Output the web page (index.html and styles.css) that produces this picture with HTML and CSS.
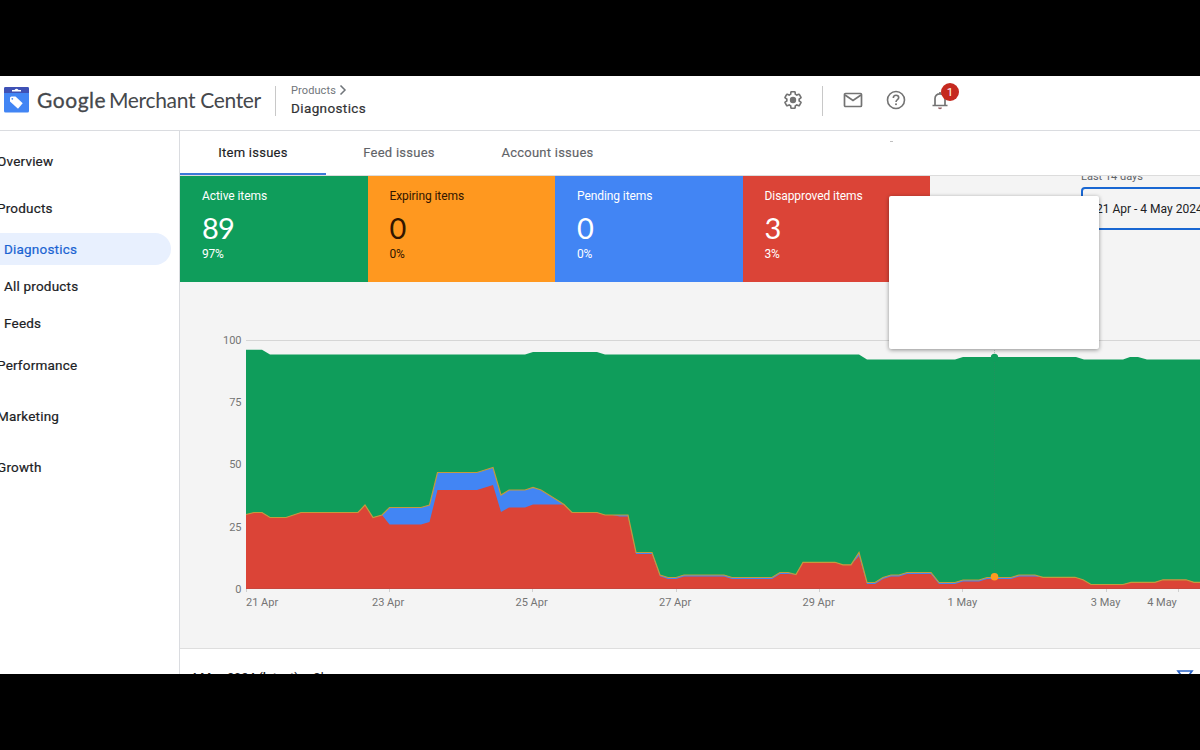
FILE: index.html
```html
<!DOCTYPE html>
<html lang="en">
<head>
<meta charset="utf-8">
<title>Google Merchant Center</title>
<link rel="stylesheet" href="styles.css">
</head>
<body>
<div class="app">
  <header class="topbar">
    <svg class="logo" width="25" height="26" viewBox="0 0 25 26"><rect width="25" height="25.500" rx="1.500" fill="#4285f4"/><path d="M0 6V1.500Q0 0 1.500 0H23.500Q25 0 25 1.500V6Z" fill="#3f51b5"/><path d="M8 4.500V3H10.500Q12.500 .5 14.500 3H17V4.500Z" fill="#fff"/><path d="M6 11Q6 9.500 7.500 9.500H11.500L18.700 16.200L14 21.700L6 14.500Z" fill="#fff"/><circle cx="8.300" cy="11.800" r=".9" fill="#4285f4"/></svg>
    <div class="brand"><b>Google</b><span>Merchant Center</span></div>
    <div class="crumbs">
      <div class="crumb-parent">Products<svg width="8" height="10" viewBox="0 0 8 10"><path d="M1.500 .5L6 5L1.500 9.500" fill="none" stroke="#70757a" stroke-width="1.500"/></svg></div>
      <div class="crumb-current">Diagnostics</div>
    </div>
    <div class="actions">
      <svg width="22" height="22" viewBox="0 0 24 24"><path d="M19.430 12.980c.04-.32.07-.64.07-.98s-.03-.66-.07-.98l2.110-1.650c.19-.15.240-.42.120-.64l-2-3.460c-.12-.22-.39-.3-.61-.22l-2.490 1c-.52-.4-1.080-.73-1.690-.98l-.38-2.650A.488.488 0 0 0 14 2h-4c-.25 0-.46.180-.49.420l-.38 2.650c-.61.250-1.170.590-1.690.980l-2.490-1c-.23-.09-.49 0-.61.220l-2 3.460c-.13.220-.07.490.120.640l2.110 1.650c-.04.320-.07.650-.07.980s.03.660.07.980l-2.110 1.650c-.19.150-.24.420-.12.640l2 3.460c.12.220.390.300.610.220l2.490-1c.52.400 1.080.730 1.690.980l.38 2.650c.03.240.240.420.490.420h4c.25 0 .46-.18.490-.42l.38-2.650c.61-.25 1.170-.59 1.690-.98l2.490 1c.23.090.49 0 .61-.22l2-3.460c.12-.22.070-.49-.12-.64z" transform="translate(1.200 1.200) scale(.9)" fill="none" stroke="#737373" stroke-width="2"/><circle cx="12" cy="12" r="3.500" fill="#737373"/></svg>
      <i class="rule"></i>
      <svg width="20" height="16" viewBox="0 0 20 16"><rect x="1.500" y="1.500" width="17" height="13" rx="1" fill="none" stroke="#737373" stroke-width="1.700"/><path d="M2 3L10 8.500L18 3" fill="none" stroke="#737373" stroke-width="1.700"/></svg>
      <svg class="help" width="20" height="20" viewBox="0 0 20 20"><circle cx="10" cy="10" r="8.500" fill="none" stroke="#737373" stroke-width="1.600"/><path d="M7.300 8Q7.300 5.300 10 5.300T12.700 7.800C12.700 9.700 10 9.700 10 12" fill="none" stroke="#737373" stroke-width="1.600"/><circle cx="10" cy="14.200" r="1" fill="#737373"/></svg>
      <div class="bell">
        <svg width="18" height="20" viewBox="0 0 18 20"><path d="M1.500 15.500H16.500M4 15V8.500C4 5.500 6 3.800 9 3.800S14 5.500 14 8.500V15M9 2V4" fill="none" stroke="#737373" stroke-width="1.700"/><path d="M7 17.500H11Q11 19.200 9 19.200T7 17.500Z" fill="#956568"/></svg>
        <span class="badge">1</span>
      </div>
    </div>
  </header>
  <div class="body">
    <nav class="side">
      <a class="n1">Overview</a>
      <a class="n2">Products</a>
      <a class="sub active">Diagnostics</a>
      <a class="sub s2">All products</a>
      <a class="sub s3">Feeds</a>
      <a class="n3">Performance</a>
      <a class="n4">Marketing</a>
      <a class="n5">Growth</a>
    </nav>
    <main class="main">
      <div class="tabs">
        <div class="tab selected">Item issues</div>
        <div class="tab">Feed issues</div>
        <div class="tab t3">Account issues</div>
        <i class="speck"></i>
      </div>
      <section class="panel">
        <div class="summary">
          <div class="cards">
            <div class="card green"><div class="label">Active items</div><div class="num">89</div><div class="pct">97%</div></div>
            <div class="card orange"><div class="label">Expiring items</div><div class="num">0</div><div class="pct">0%</div></div>
            <div class="card blue"><div class="label">Pending items</div><div class="num">0</div><div class="pct">0%</div></div>
            <div class="card red"><div class="label">Disapproved items</div><div class="num">3</div><div class="pct">3%</div></div>
          </div>
          <div class="range"><div class="range-label">Last 14 days</div><div class="range-box">21 Apr - 4 May 2024</div></div>
        </div>
        <svg class="chart" width="1020" height="366" viewBox="180 282 1020 366">
          <path d="M246 340.500H1200" stroke="#d6d6d6"/>
          <path fill="#0f9d5b" d="M246 589V349.700H262L270 354.500H525L533 352H597L605 354.500H859L867 359.500H955L963 357H1076L1084 359.500H1123L1130 357H1138L1147 359.500H1200V589Z"/>
          <path fill="#4285f4" d="M246 589V514.500L254 512.500H262L270 517.500H286L301 512.500H358L365 505L373 517.500L382 515L389.500 507.500H421L429.500 505L437.500 472.500H477L493 467.500L501 495L509 490H525L533 487.500L541 490L557 500L564 504.500L572 512.500H597L605 515H628L636 552.500H652L660 575L668 577.500H676L684 575H724L732 577.500H772L780 572.500H788L796 574.500L803 562.300H835L843 564.800H851L859 552.500L867 582.500H875L883 577.500L891 575H899L907 572.500H931L939 582.500H955L963 580H979L987 577.500H1011L1019 575H1035L1043 577.300H1075L1083 579.800L1091 584.500H1123L1131 582.300H1155L1163 579.800H1186L1194 582.300H1200V589Z"/>
          <path fill="#db4437" d="M246 589V514.500L254 512.500H262L270 517.500H286L301 512.500H358L365 505L373 517.500L382 515L389.500 524.500H421L429.500 522L437.500 490H477L493 485L501 512L509 507.500H525L533 504.500H564L572 512.500H597L605 515H612L620 516.500H628L636 554H652L660 576.300L668 579H676L684 576.500H724L732 579H772L780 574H788L796 574.500L803 562.300H835L843 564.800H851L859 556L867 584H875L883 579L891 576.500H899L907 574H931L939 584H955L963 581.500H979L987 579H1011L1019 576.500H1035L1043 577.300H1075L1083 579.800L1091 584.500H1123L1131 582.300H1155L1163 579.800H1186L1194 582.300H1200V589Z"/>
          <path fill="none" stroke="#c49a3c" stroke-width="1.200" d="M246 514.500L254 512.500H262L270 517.500H286L301 512.500H358L365 505L373 517.500L382 515L389.500 507.500H421L429.500 505L437.500 472.500H477L493 467.500L501 495L509 490H525L533 487.500L541 490L557 500L564 504.500L572 512.500H597L605 515H628L636 552.500H652L660 575L668 577.500H676L684 575H724L732 577.500H772L780 572.500H788L796 574.500L803 562.300H835L843 564.800H851L859 552.500L867 582.500H875L883 577.500L891 575H899L907 572.500H931L939 582.500H955L963 580H979L987 577.500H1011L1019 575H1035L1043 577.300H1075L1083 579.800L1091 584.500H1123L1131 582.300H1155L1163 579.800H1186L1194 582.300H1200"/>
          <path d="M246 588.500H1200" stroke="#b94a42" stroke-opacity=".6"/>
          <path d="M246.500 589V592M389.500 589V592M532.500 589V592M676.500 589V592M819.500 589V592M962.500 589V592M1106.500 589V592M1178.500 589V592" stroke="#d0d0d0"/>
          <path d="M994.500 350V577" stroke="#3c8060" stroke-opacity=".35" stroke-dasharray="1 1"/>
          <circle cx="994.500" cy="357.500" r="3.700" fill="#0f9d5b"/>
          <circle cx="994.500" cy="576.700" r="3.800" fill="#ff9a20"/>
          <g class="axis" text-anchor="end"><text x="241.500" y="344">100</text><text x="241.500" y="406">75</text><text x="241.500" y="468">50</text><text x="241.500" y="530.500">25</text><text x="241.500" y="593">0</text></g>
          <g class="axis"><text x="246" y="605.500">21 Apr</text><text x="372" y="605.500">23 Apr</text><text x="515.500" y="605.500">25 Apr</text><text x="659" y="605.500">27 Apr</text><text x="802.500" y="605.500">29 Apr</text><text x="947.500" y="605.500">1 May</text><text x="1090.800" y="605.500">3 May</text><text x="1147.200" y="605.500">4 May</text></g>
        </svg>
      </section>
      <div class="details"><span>4 May 2024 (latest)</span><span class="chg">Change</span><svg width="18" height="16" viewBox="0 0 18 16"><path d="M2 1H16L11 8V14H7V8Z" fill="none" stroke="#2b64c8" stroke-width="1.700"/></svg></div>
    </main>
  </div>
  <div class="popover"></div>
</div>
</body>
</html>
```

FILE: styles.css
```css
* { box-sizing: border-box; }
body { margin: 0; height: 750px; padding: 76px 0; background: #000; overflow: hidden; font-family: Roboto, sans-serif; }
.app { position: relative; height: 598px; width: 1200px; overflow: hidden; background: #fff; }
.topbar { height: 55px; display: flex; border-bottom: 1px solid #dadce0; padding-left: 4px; }
.logo { margin-top: 11px; flex: none; }
.brand { width: 246px; height: 29px; margin-top: 9px; padding-left: 8px; font: 21px/30px Lato, sans-serif; color: #45484c; white-space: nowrap; }
.brand b { display: inline-block; width: 72px; font-weight: 400; letter-spacing: .55px; -webkit-text-stroke: .3px #45484c; }
.brand span { letter-spacing: -.33px; }
.crumbs { height: 30px; margin-top: 10px; border-left: 1px solid #c8c8c8; padding-left: 15px; width: 201px; }
.crumb-parent { font: 11px/12px Roboto, sans-serif; letter-spacing: .1px; color: #70757a; display: flex; gap: 3px; margin-top: -1px; }
.crumb-current { font: 13.500px/20px Roboto, sans-serif; letter-spacing: .38px; color: #303134; margin-top: 1px; -webkit-text-stroke: .2px #303134; }
.actions { display: flex; align-items: center; height: 30px; margin: 9px 0 0 306px; }
.rule { width: 1px; height: 30px; background: #c8c8c8; margin: 1px 20px 0 18px; }
.help { margin-left: 23px; }
.bell { position: relative; margin-left: 25px; height: 20px; }
.badge { position: absolute; left: 10px; top: -7px; width: 18px; height: 18px; border-radius: 50%; background: #c5291f; color: #fff; font-size: 11.500px; line-height: 18px; text-align: center; }
.body { display: flex; height: 543px; }
.side { width: 180px; flex: none; border-right: 1px solid #dadce0; display: flex; flex-direction: column; font: 13.500px/20px Roboto, sans-serif; letter-spacing: .2px; color: #202124; -webkit-text-stroke: .2px; padding-top: 20px; }
.side a { display: block; margin-left: -3px; white-space: nowrap; }
.side .n2 { margin-top: 27px; }
.side .sub { margin-left: 0; padding-left: 4px; }
.side .active { margin: 15px 8px 0 0; height: 32px; line-height: 33px; border-radius: 0 16px 16px 0; background: #e8f0fe; color: #1a63d2; }
.side .s2 { margin-top: 11px; }
.side .s3 { margin-top: 17px; }
.side .n3 { margin-top: 22px; }
.side .n4, .side .n5 { margin-top: 31px; }
.main { width: 1020px; }
.tabs { display: flex; height: 45px; border-bottom: 1px solid #dcdcdc; }
.tab { width: 146px; text-align: center; font: 13px/44px Roboto, sans-serif; letter-spacing: .25px; -webkit-text-stroke: .15px; color: #5f6368; height: 44px; }
.t3 { width: 151px; }
.selected { color: #202124; border-bottom: 2px solid #3c78d8; }
.speck { width: 3px; height: 1px; background: #c0c0c0; margin: 10px 0 0 267px; }
.panel { height: 473px; background: #f4f4f4; border-bottom: 1px solid #dedede; }
.summary { display: flex; height: 106px; }
.cards { display: flex; width: 750px; }
.card { flex: 1; padding: 13px 22px 0; color: #fff; }
.green { background: #0f9d5b; }
.orange { background: #ff981f; color: #321600; }
.blue { background: #4285f4; }
.red { background: #db4437; }
.label { font-size: 12px; line-height: 15px; letter-spacing: -.08px; white-space: nowrap; }
.num { font: 29px/36px Lato, sans-serif; margin-top: 6px; letter-spacing: -.7px; }
.pct { font-size: 12px; line-height: 15px; margin-top: 1px; letter-spacing: -.2px; }
.range { width: 119px; margin-left: 151px; overflow: hidden; }
.range-label { font-size: 11px; line-height: 14px; margin-top: -6px; height: 17px; color: #5f6368; }
.range-box { width: 150px; height: 43px; border: 2px solid #1967d2; border-radius: 4px; font-size: 12px; line-height: 40px; padding-left: 13px; color: #202124; white-space: nowrap; }
.chart { display: block; }
.axis { font: 11px Roboto, sans-serif; fill: #757575; }
.details { height: 25px; display: flex; padding: 20px 6px 0 10px; font: 500 12.500px/18px Roboto, sans-serif; color: #202124; overflow: hidden; }
.chg { margin-left: 14px; font-weight: 400; }
.details svg { margin-left: auto; margin-top: 1px; flex: none; }
.popover { position: absolute; left: 889px; top: 120px; width: 210px; height: 153px; background: #fff; border-radius: 2px; box-shadow: 0 1px 4px rgba(0,0,0,.42); }
```
